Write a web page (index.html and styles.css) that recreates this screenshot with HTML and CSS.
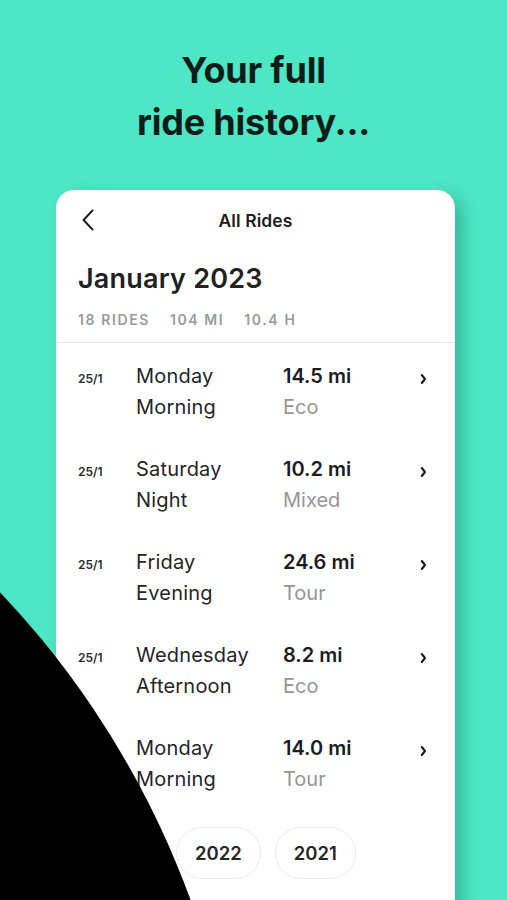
FILE: index.html
```html
<!DOCTYPE html>
<html lang="en">
<head>
<meta charset="utf-8">
<title>All Rides</title>
<link rel="stylesheet" href="styles.css">
</head>
<body>
<div class="page">
  <h1 class="headline">Your full<br>ride history...</h1>

  <section class="card">
    <header class="card-head">
      <svg class="back" width="12" height="22" viewBox="0 0 12 22" aria-hidden="true">
        <path d="M10.5 1.5 L1.5 11 L10.5 20.5" fill="none" stroke="#1d1d1d" stroke-width="1.9" stroke-linecap="round" stroke-linejoin="round"/>
      </svg>
      <div class="card-title">All Rides</div>
    </header>

    <div class="month">
      <h2 class="month-name">January 2023</h2>
      <div class="stats">
        <span>18 RIDES</span>
        <span>104 MI</span>
        <span>10.4 H</span>
      </div>
    </div>

    <ul class="rides">
      <li class="ride">
        <span class="date">25/1</span>
        <span class="when">Monday<br>Morning</span>
        <span class="dist"><b>14.5 mi</b><br><i>Eco</i></span>
        <svg class="chev" width="7" height="12" viewBox="0 0 7 12" aria-hidden="true"><path d="M1.8 2 L5 6 L1.8 10" fill="none" stroke="#1d1d1d" stroke-width="2.1" stroke-linecap="round" stroke-linejoin="round"/></svg>
      </li>
      <li class="ride">
        <span class="date">25/1</span>
        <span class="when">Saturday<br>Night</span>
        <span class="dist"><b>10.2 mi</b><br><i>Mixed</i></span>
        <svg class="chev" width="7" height="12" viewBox="0 0 7 12" aria-hidden="true"><path d="M1.8 2 L5 6 L1.8 10" fill="none" stroke="#1d1d1d" stroke-width="2.1" stroke-linecap="round" stroke-linejoin="round"/></svg>
      </li>
      <li class="ride">
        <span class="date">25/1</span>
        <span class="when">Friday<br>Evening</span>
        <span class="dist"><b>24.6 mi</b><br><i>Tour</i></span>
        <svg class="chev" width="7" height="12" viewBox="0 0 7 12" aria-hidden="true"><path d="M1.8 2 L5 6 L1.8 10" fill="none" stroke="#1d1d1d" stroke-width="2.1" stroke-linecap="round" stroke-linejoin="round"/></svg>
      </li>
      <li class="ride">
        <span class="date">25/1</span>
        <span class="when">Wednesday<br>Afternoon</span>
        <span class="dist"><b>8.2 mi</b><br><i>Eco</i></span>
        <svg class="chev" width="7" height="12" viewBox="0 0 7 12" aria-hidden="true"><path d="M1.8 2 L5 6 L1.8 10" fill="none" stroke="#1d1d1d" stroke-width="2.1" stroke-linecap="round" stroke-linejoin="round"/></svg>
      </li>
      <li class="ride">
        <span class="date">25/1</span>
        <span class="when">Monday<br>Morning</span>
        <span class="dist"><b>14.0 mi</b><br><i>Tour</i></span>
        <svg class="chev" width="7" height="12" viewBox="0 0 7 12" aria-hidden="true"><path d="M1.8 2 L5 6 L1.8 10" fill="none" stroke="#1d1d1d" stroke-width="2.1" stroke-linecap="round" stroke-linejoin="round"/></svg>
      </li>
    </ul>

    <div class="years">
      <span class="year">2023</span>
      <span class="year">2022</span>
      <span class="year">2021</span>
    </div>
  </section>

  <div class="blob" aria-hidden="true"></div>
</div>
</body>
</html>
```

FILE: styles.css
```css
* { box-sizing: border-box; }

html, body {
  margin: 0;
  padding: 0;
  height: 100%;
}

body {
  background: #4de7c5;
  font-family: "Inter", "Noto Sans", sans-serif;
  color: #222;
  overflow: hidden;
}

.page {
  position: relative;
  width: 507px;
  height: 900px;
  overflow: hidden;
  padding-top: 44px;
}

.headline {
  margin: 0;
  text-align: center;
  font-size: 36px;
  line-height: 52px;
  font-weight: 700;
  color: #0d1c19;
  letter-spacing: -0.2px;
}

.card {
  margin: 42px 0 0 56px;
  width: 399px;
  height: 760px;
  background: #fff;
  border-radius: 18px;
  box-shadow: 8px 6px 16px rgba(0, 70, 55, 0.28);
}

.card-head {
  position: relative;
  height: 60px;
  display: flex;
  align-items: center;
  justify-content: center;
}

.back {
  position: absolute;
  left: 26px;
  top: 19px;
}

.card-title {
  font-size: 17.5px;
  font-weight: 600;
  color: #1d1d1d;
  letter-spacing: 0.1px;
}

.month {
  padding: 12px 22px 0;
  border-bottom: 1px solid #e6e6e6;
}

.month-name {
  margin: 0;
  font-size: 27px;
  line-height: 34px;
  font-weight: 600;
  color: #222;
  letter-spacing: 0.2px;
}

.stats {
  display: flex;
  gap: 20px;
  margin-top: 15px;
  padding-bottom: 13px;
  font-size: 14px;
  line-height: 18px;
  font-weight: 600;
  letter-spacing: 1.6px;
  color: #9a9a9a;
}

.rides {
  list-style: none;
  margin: 0;
  padding: 18px 0 0 22px;
}

.ride {
  display: flex;
  align-items: baseline;
  height: 93px;
  font-size: 20px;
  line-height: 31px;
  letter-spacing: 0.2px;
}

.date {
  width: 58px;
  flex: none;
  font-size: 12px;
  font-weight: 600;
  color: #2a2a2a;
  letter-spacing: 0;
}

.when {
  width: 147px;
  flex: none;
  color: #252525;
}

.dist {
  flex: 1;
  letter-spacing: 0;
}

.dist b {
  font-weight: 600;
  color: #1d1d1d;
}

.dist i {
  font-style: normal;
  color: #959595;
}

.chev {
  flex: none;
  margin-right: 28px;
  align-self: flex-start;
  margin-top: 12px;
}

.years {
  display: flex;
  gap: 14px;
  padding-left: 21px;
  margin-top: 1px;
}

.year {
  display: flex;
  align-items: center;
  justify-content: center;
  height: 52px;
  padding: 0 18px;
  border: 1.5px solid #ececec;
  border-radius: 26px;
  font-size: 18.5px;
  font-weight: 600;
  color: #262626;
}

.blob {
  position: absolute;
  left: -1543px;
  top: 313px;
  width: 1788px;
  height: 1788px;
  border-radius: 50%;
  background: #000;
}
```
